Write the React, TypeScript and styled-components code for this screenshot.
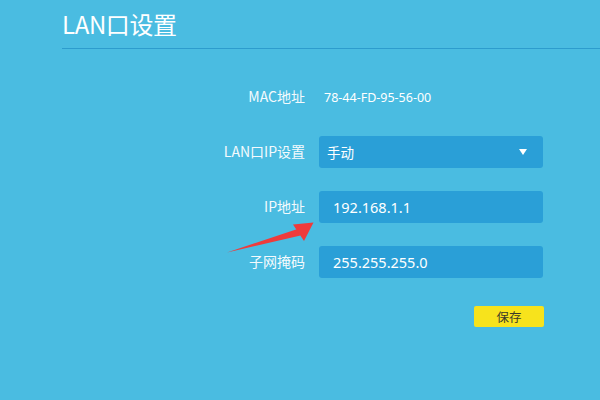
import React from "react";
import styled, { createGlobalStyle } from "styled-components";

const Global = createGlobalStyle`
  html, body { margin: 0; padding: 0; }
  body {
    background: #4abce1;
    font-family: "Noto Sans", "Noto Sans CJK SC", sans-serif;
  }
`;

const Page = styled.div`
  position: relative;
  width: 600px;
  height: 400px;
  background: #4abce1;
  overflow: hidden;
`;

const Header = styled.div`
  margin-left: 62px;
  height: 49px;
  border-bottom: 1px solid #2d9ccd;
  box-sizing: border-box;
  padding-top: 7px;
`;

const Title = styled.h1`
  margin: 0;
  font-family: "Noto Sans CJK SC", "Noto Sans", sans-serif;
  font-weight: 400;
  font-size: 24px;
  line-height: 34px;
  color: #ffffff;
  letter-spacing: -0.4px;
`;

const Form = styled.div`
  display: grid;
  grid-template-columns: 305px 224px;
  column-gap: 14px;
  row-gap: 23px;
  grid-auto-rows: 32px;
  margin-top: 32px;
`;

const Label = styled.div`
  display: flex;
  align-items: center;
  justify-content: flex-end;
  font-family: "Noto Sans CJK SC", sans-serif;
  font-size: 14px;
  color: #f4fafd;
  margin-top: -2px;
`;

const Value = styled.div`
  display: flex;
  align-items: center;
  padding-left: 5px;
  font-family: "Noto Sans", "Noto Sans CJK SC", sans-serif;
  font-size: 12.5px;
  color: #ffffff;
`;

const Field = styled.div<{ $large?: boolean }>`
  display: flex;
  align-items: center;
  justify-content: space-between;
  background: #2a9fd7;
  border-radius: 3px;
  padding: 0 16px 0 ${(p) => (p.$large ? 14 : 8)}px;
  font-family: "Noto Sans", "Noto Sans CJK SC", sans-serif;
  font-size: ${(p) => (p.$large ? 14.5 : 13.5)}px;
  color: #ffffff;
`;

const Caret = styled.span`
  width: 0;
  height: 0;
  border-left: 4.5px solid transparent;
  border-right: 4.5px solid transparent;
  border-top: 6px solid #ffffff;
`;

const ButtonCell = styled.div`
  grid-column: 2;
  display: flex;
  justify-content: flex-end;
  align-items: flex-start;
  margin-top: 5px;
`;

const SaveButton = styled.button`
  width: 70px;
  height: 21px;
  border: none;
  border-radius: 2px;
  background: #f7e31c;
  color: #3a3a2a;
  font-family: "Noto Sans CJK SC", sans-serif;
  font-size: 12.5px;
  padding: 0;
  margin-right: -1px;
  cursor: pointer;
`;

const Arrow = styled.svg`
  position: absolute;
  left: 0;
  top: 0;
  pointer-events: none;
`;

export default function App() {
  return (
    <Page>
      <Global />
      <Header>
        <Title>LAN口设置</Title>
      </Header>
      <Form>
        <Label>MAC地址</Label>
        <Value>78-44-FD-95-56-00</Value>

        <Label>LAN口IP设置</Label>
        <Field>
          <span>手动</span>
          <Caret />
        </Field>

        <Label>IP地址</Label>
        <Field $large>192.168.1.1</Field>

        <Label>子网掩码</Label>
        <Field $large>255.255.255.0</Field>

        <ButtonCell>
          <SaveButton>保存</SaveButton>
        </ButtonCell>
      </Form>
      <Arrow width="600" height="400" viewBox="0 0 600 400">
        <path d="M227 252.5 L297.5 229 L300.5 235.5 Z" fill="#ef3b3b" />
        <path d="M293 224.5 L313.5 222.5 L304 241 Z" fill="#ef3b3b" />
      </Arrow>
    </Page>
  );
}
